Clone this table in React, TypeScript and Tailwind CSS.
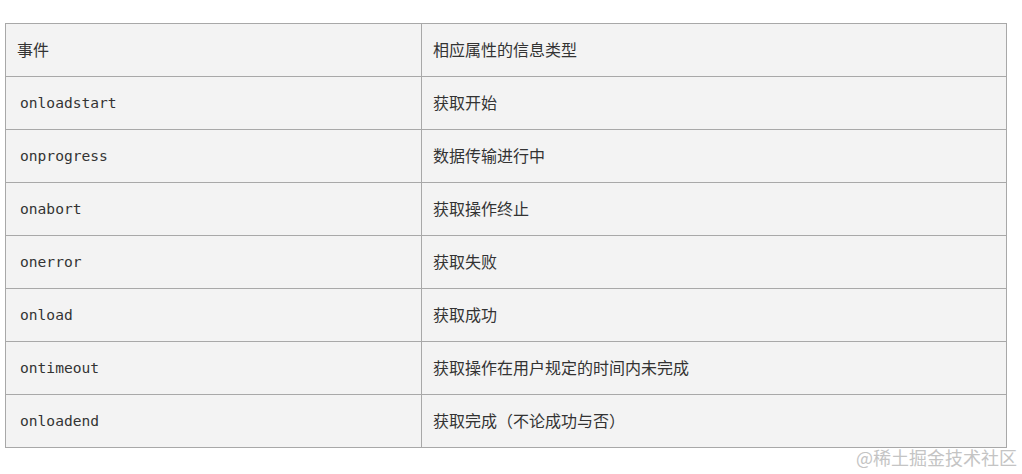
const rows = [
  { event: "onloadstart", desc: "获取开始" },
  { event: "onprogress", desc: "数据传输进行中" },
  { event: "onabort", desc: "获取操作终止" },
  { event: "onerror", desc: "获取失败" },
  { event: "onload", desc: "获取成功" },
  { event: "ontimeout", desc: "获取操作在用户规定的时间内未完成" },
  { event: "onloadend", desc: "获取完成（不论成功与否）" },
];

const cjk = "font-['Microsoft_YaHei','Noto_Sans_CJK_SC',sans-serif]";

export default function App() {
  return (
    <div className="relative w-[1022px] h-[474px] bg-white pt-[23px] pl-[5px] overflow-hidden">
      {/* Event table */}
      <div className="grid w-[1002px] grid-cols-[416px_1fr] border-l border-t border-[#a8a8a8] bg-[#f3f3f3] text-[#333]">
        <div className={`flex h-[53px] items-center border-r border-b border-[#a8a8a8] pl-[11px] pb-[3px] text-[16px] ${cjk}`}>
          事件
        </div>
        <div className={`flex h-[53px] items-center border-r border-b border-[#a8a8a8] pl-[11px] pb-[3px] text-[16px] ${cjk}`}>
          相应属性的信息类型
        </div>
        {rows.map((r) => (
          <div key={r.event} className="contents">
            <div className="flex h-[53px] items-center border-r border-b border-[#a8a8a8] pl-[14px] text-[14.6px] font-['DejaVu_Sans_Mono',monospace]">
              {r.event}
            </div>
            <div className={`flex h-[53px] items-center border-r border-b border-[#a8a8a8] pl-[11px] pb-[2px] text-[16px] ${cjk}`}>
              {r.desc}
            </div>
          </div>
        ))}
      </div>

      {/* Watermark */}
      <div className={`absolute right-[5px] top-[444px] text-[18px] text-[#c4c4c4] ${cjk}`}>
        @稀土掘金技术社区
      </div>
    </div>
  );
}
